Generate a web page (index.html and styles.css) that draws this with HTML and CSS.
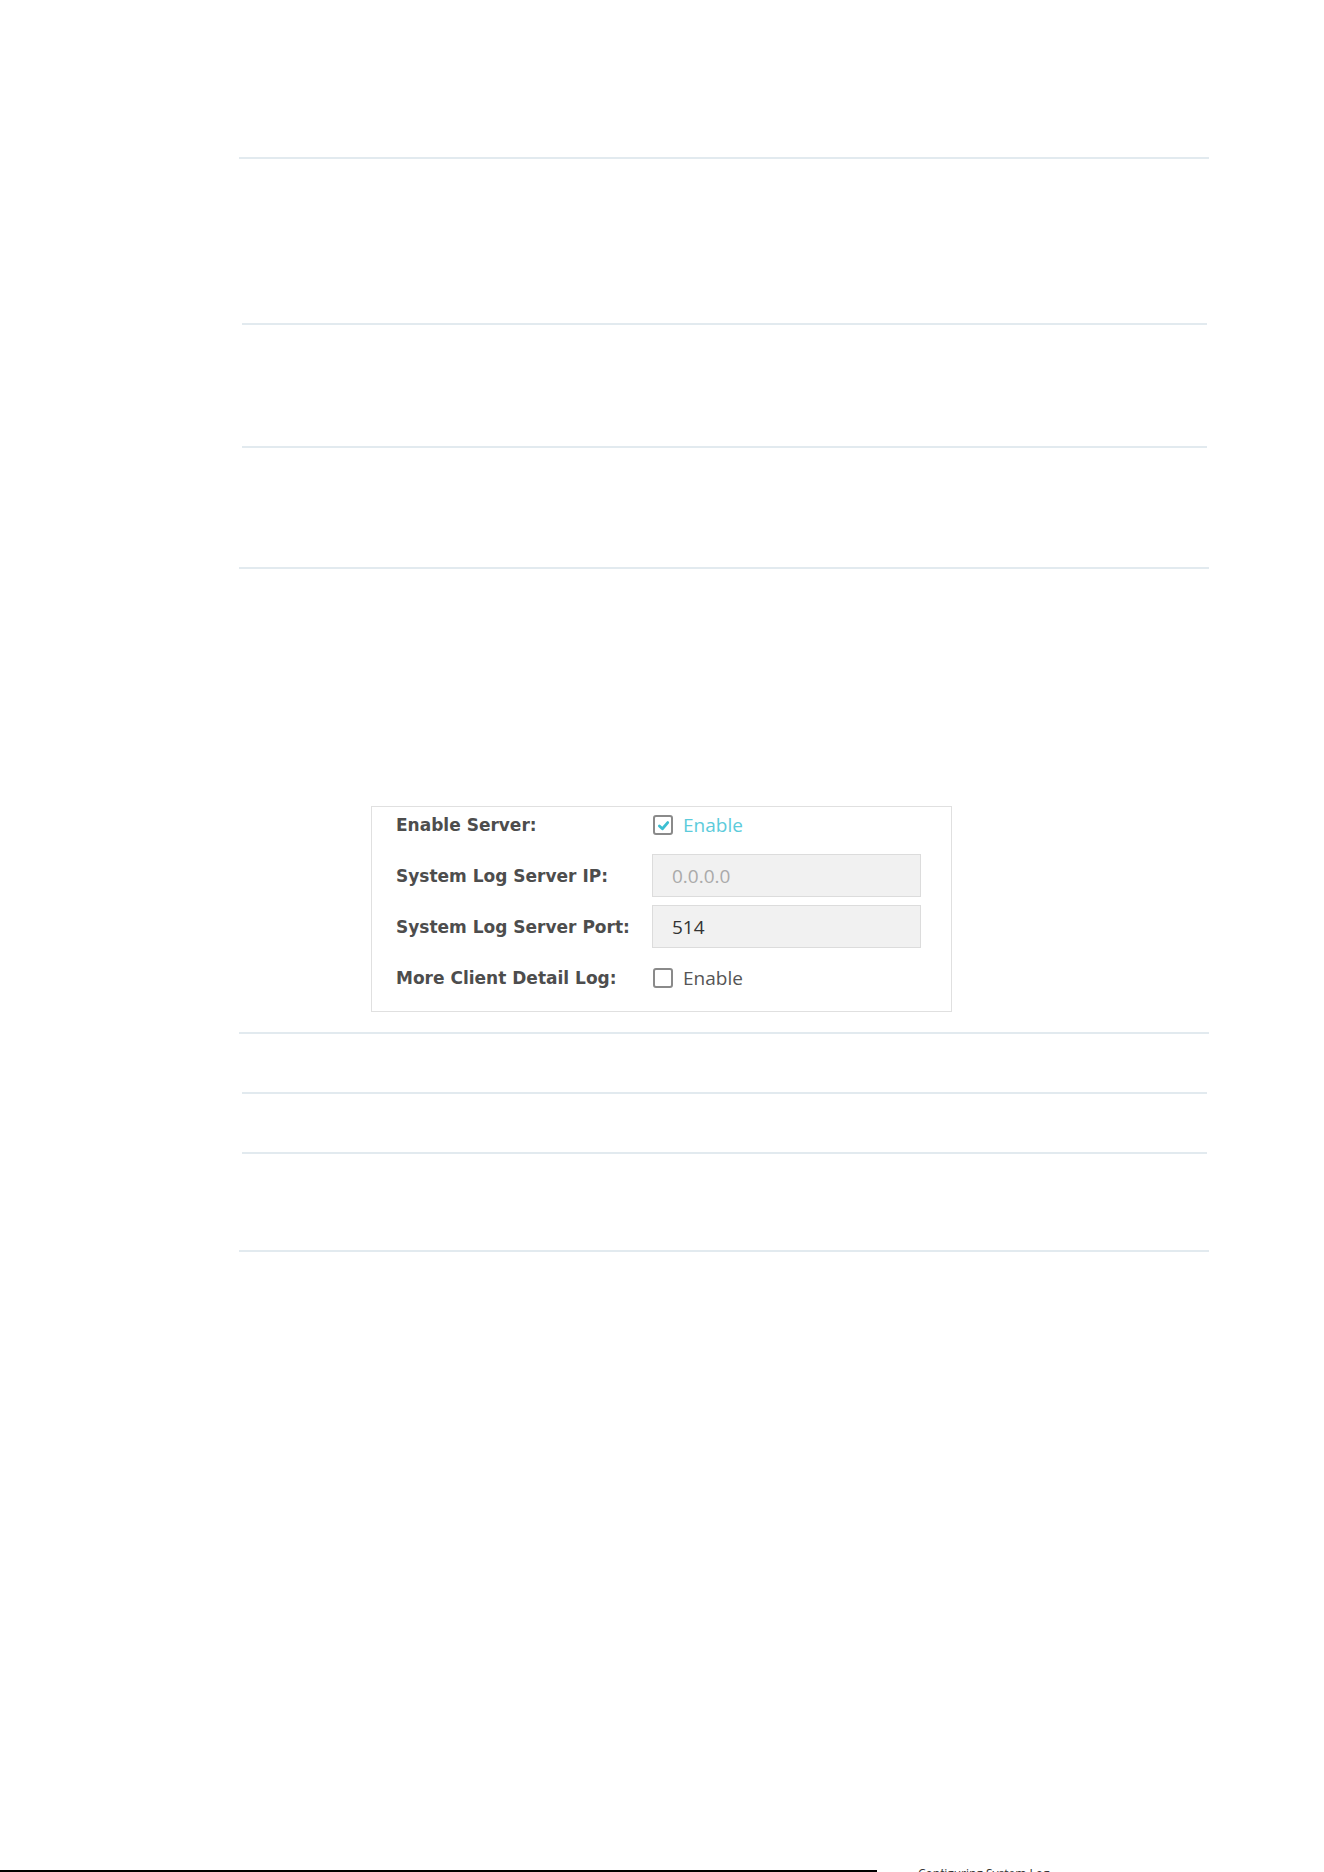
FILE: index.html
```html
<!DOCTYPE html>
<html lang="en">
<head>
  <meta charset="UTF-8">
  <title>System Log Settings</title>
  <link rel="stylesheet" href="styles.css">
</head>
<body>
  <div class="page">
    <div class="table table-top">
      <div class="cell cell-tall"></div>
      <div class="sep"></div>
      <div class="cell cell-mid"></div>
      <div class="sep"></div>
      <div class="cell cell-mid2"></div>
    </div>

    <div class="panel">
      <div class="field field-first">
        <span class="label">Enable Server:</span>
        <label class="check checked">
          <span class="box">
            <svg viewBox="0 0 12 12" width="13" height="13"><path d="M2.2 6.4 L5 9 L9.9 3.3" fill="none" stroke="#3cbfd2" stroke-width="2.6" stroke-linecap="round" stroke-linejoin="round"/></svg>
          </span>
          <span class="check-text">Enable</span>
        </label>
      </div>
      <div class="field">
        <span class="label">System Log Server IP:</span>
        <div class="input disabled">0.0.0.0</div>
      </div>
      <div class="field">
        <span class="label">System Log Server Port:</span>
        <div class="input">514</div>
      </div>
      <div class="field">
        <span class="label">More Client Detail Log:</span>
        <label class="check">
          <span class="box"></span>
          <span class="check-text">Enable</span>
        </label>
      </div>
    </div>

    <div class="table table-bottom">
      <div class="cell cell-short"></div>
      <div class="sep"></div>
      <div class="cell cell-short"></div>
      <div class="sep"></div>
      <div class="cell cell-last"></div>
    </div>
  </div>

  <div class="footer">
    <div class="footer-rule"></div>
    <span class="footer-text">Configuring System Log</span>
  </div>
</body>
</html>
```

FILE: styles.css
```css
html, body {
  margin: 0;
  padding: 0;
  background: #fff;
}
body {
  font-family: 'Open Sans', 'Liberation Sans', sans-serif;
  color: #4a4a4a;
  min-height: 100vh;
  display: flex;
  flex-direction: column;
}
.page {
  width: 970px;
  margin-left: 239px;
  padding-top: 157px;
}

/* plain bordered tables */
.table {
  border-top: 2px solid #e2eaef;
  border-bottom: 2px solid #e2eaef;
}
.sep {
  height: 2px;
  background: #e2eaef;
  margin: 0 2px 0 3px;
}
.cell-tall { height: 164px; }
.cell-mid { height: 121px; }
.cell-mid2 { height: 119px; }
.cell-short { height: 58px; }
.cell-last { height: 96px; }

/* settings panel */
.panel {
  width: 579px;
  margin: 237px 0 20px 132px;
  border: 1px solid #e0e0e0;
  padding: 0 0 12px;
  display: flex;
  flex-direction: column;
  gap: 8px;
}
.field {
  height: 43px;
  display: flex;
  align-items: center;
}
.field-first {
  height: 36px;
  margin-bottom: 3px;
}
.label {
  width: 280px;
  padding-left: 24px;
  box-sizing: border-box;
  font-family: 'DejaVu Sans', 'Open Sans', sans-serif;
  font-size: 17px;
  font-weight: 700;
  color: #4d4d4d;
  white-space: nowrap;
}
.input {
  width: 269px;
  height: 43px;
  box-sizing: border-box;
  border: 1px solid #dcdcdc;
  background: #f1f1f1;
  padding-left: 19px;
  display: flex;
  align-items: center;
  font-size: 19px;
  color: #333;
}
.input.disabled {
  color: #aaa;
}
.check {
  display: flex;
  align-items: center;
  gap: 10px;
  margin-left: 1px;
}
.box {
  width: 20px;
  height: 20px;
  box-sizing: border-box;
  border: 2px solid #8a8a8a;
  border-radius: 3px;
  background: #fff;
  display: flex;
  align-items: center;
  justify-content: center;
}
.check-text {
  font-size: 19px;
  color: #555;
}
.check.checked .check-text {
  color: #5ccbdb;
}

/* page footer strip, cut at the window edge */
.footer {
  margin-top: auto;
  height: 3px;
  overflow: hidden;
  display: flex;
  align-items: flex-start;
}
.footer-rule {
  width: 877px;
  height: 2px;
  margin-top: 1px;
  background: #000;
}
.footer-text {
  margin-left: 41px;
  margin-top: 1px;
  font-size: 12px;
  line-height: 8px;
  color: #333;
  white-space: nowrap;
}
```
